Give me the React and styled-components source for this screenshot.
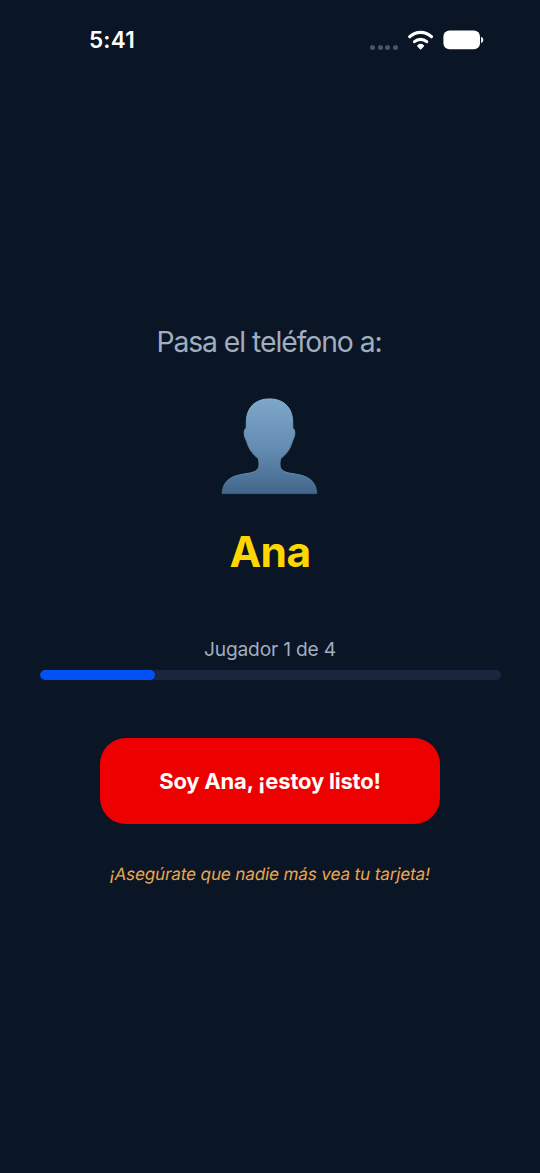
import styled, { createGlobalStyle } from "styled-components";

const GlobalStyle = createGlobalStyle`
  * {
    box-sizing: border-box;
  }
  body {
    margin: 0;
    background: #0a1525;
    font-family: Inter, sans-serif;
  }
`;

const App = () => {
  const player = { name: "Ana", index: 1, total: 4 };

  return (
    <Screen>
      <GlobalStyle />
      <StatusBar>
        <Clock>5:41</Clock>
        <StatusIcons>
          <Signal>
            <i />
            <i />
            <i />
            <i />
          </Signal>
          <WifiIcon />
          <BatteryIcon />
        </StatusIcons>
      </StatusBar>
      <Content>
        <Label>Pasa el teléfono a:</Label>
        <Avatar />
        <Name>{player.name}</Name>
        <Counter>
          Jugador {player.index} de {player.total}
        </Counter>
        <Track>
          <Fill style={{ width: `${(player.index / player.total) * 100}%` }} />
        </Track>
        <Button>Soy {player.name}, ¡estoy listo!</Button>
        <Warning>¡Asegúrate que nadie más vea tu tarjeta!</Warning>
      </Content>
    </Screen>
  );
};

const WifiIcon = () => (
  <svg width="26" height="20" viewBox="0 0 26 20" fill="none" stroke="#fff" strokeLinecap="round">
    <path d="M1.8 6.7 A15.6 15.6 0 0 1 23.4 6.7" strokeWidth="3.2" />
    <path d="M6.5 11.6 A9.2 9.2 0 0 1 18.7 11.6" strokeWidth="3.2" />
    <path
      d="M12.6 18.5 L10 15.9 A3.9 3.9 0 0 1 15.2 15.9 Z"
      fill="#fff"
      strokeWidth="1.8"
      strokeLinejoin="round"
    />
  </svg>
);

const BatteryIcon = () => (
  <svg width="41" height="20" viewBox="0 0 41 20" fill="#fff">
    <rect x="0.4" y="0.6" width="36.6" height="18.6" rx="6" />
    <path d="M38.1 6.8 C41 8 41 12 38.1 13.2 Z" />
  </svg>
);

const Avatar = () => (
  <Silhouette viewBox="0 0 98 98">
    <defs>
      <linearGradient id="bust" x1="0" y1="0" x2="0" y2="1">
        <stop offset="0" stopColor="#7da7c9" />
        <stop offset="0.5" stopColor="#668db3" />
        <stop offset="1" stopColor="#42668c" />
      </linearGradient>
      <linearGradient id="rim" x1="0" y1="0" x2="0" y2="1">
        <stop offset="0" stopColor="#86bdd2" />
        <stop offset="0.5" stopColor="#5b86a8" />
        <stop offset="0.8" stopColor="#5b93b0" />
        <stop offset="1" stopColor="#37607e" />
      </linearGradient>
    </defs>
    <path
      fill="url(#bust)"
      stroke="url(#rim)"
      d="M48.5 1.9 C33.5 1.9 25.3 11.5 25.3 25 L25.2 31.3 C22.8 32.3 22.6 37.5 24.2 41 C24.8 42.6 25.3 43.2 25.7 44.6 C27.8 52.5 32.5 58 37.2 61.3 C38.2 64.5 38.3 68 37.6 70.5 C36 74.5 31.5 75.7 25 76.7 C13 78.4 2.1 81.5 1.1 96.6 L95.9 96.6 C94.9 81.5 84 78.4 72 76.7 C65.5 75.7 61 74.5 59.4 70.5 C58.7 68 58.8 64.5 59.8 61.3 C64.5 58 69.2 52.5 71.3 44.6 C71.7 43.2 72.2 42.6 72.8 41 C74.4 37.5 74.2 32.3 71.8 31.3 L71.7 25 C71.7 11.5 63.5 1.9 48.5 1.9 Z"
    />
  </Silhouette>
);

const Screen = styled.main`
  display: flex;
  flex-direction: column;
  height: 1173px;
  background: #0a1525;
`;

const StatusBar = styled.header`
  display: flex;
  justify-content: space-between;
  align-items: center;
  height: 80px;
  padding: 0 56px 0 89px;
`;

const Clock = styled.span`
  padding-bottom: 1px;
  font-size: 22.5px;
  font-weight: 570;
  letter-spacing: 0.2px;
  color: #fff;
`;

const StatusIcons = styled.div`
  display: flex;
  align-items: center;
  gap: 9.5px;
`;

const Signal = styled.div`
  display: flex;
  gap: 2.6px;
  padding-top: 15px;
  i {
    width: 5px;
    height: 5px;
    border-radius: 50%;
    background: #4b5463;
  }
`;

const Content = styled.section`
  display: flex;
  flex-direction: column;
  align-items: center;
  padding: 244px 39px 0;
`;

const Label = styled.p`
  margin: 0;
  padding-right: 2px;
  font-size: 28.3px;
  line-height: 36px;
  letter-spacing: -1.05px;
  color: #a0aebf;
`;

const Silhouette = styled.svg`
  width: 98px;
  height: 98px;
  margin: 37px 1px 0 0;
`;

const Name = styled.h1`
  margin: 30px 0 0;
  font-size: 42.5px;
  line-height: 54px;
  font-weight: 700;
  letter-spacing: -0.6px;
  color: #ffd700;
`;

const Counter = styled.p`
  margin: 58px 0 0;
  font-size: 19.2px;
  line-height: 24px;
  letter-spacing: -0.2px;
  color: #a0aebf;
`;

const Track = styled.div`
  width: 461px;
  height: 10px;
  margin-top: 9px;
  border-radius: 5px;
  background: #1a2540;
  overflow: hidden;
`;

const Fill = styled.div`
  height: 100%;
  border-radius: 5px;
  background: #0052f5;
`;

const Button = styled.button`
  width: 340px;
  height: 86px;
  margin-top: 58px;
  padding-bottom: 1px;
  border: none;
  border-radius: 26px;
  background: #ee0000;
  font-family: inherit;
  font-size: 22px;
  font-weight: 650;
  letter-spacing: -0.2px;
  color: #fff;
`;

/* skewed instead of italic to keep the double-storey "a" */
const Warning = styled.p`
  margin: 38px 0 0;
  font-size: 17px;
  line-height: 24px;
  letter-spacing: -0.1px;
  transform: skewX(-10deg);
  color: #eba550;
`;

export default App;
